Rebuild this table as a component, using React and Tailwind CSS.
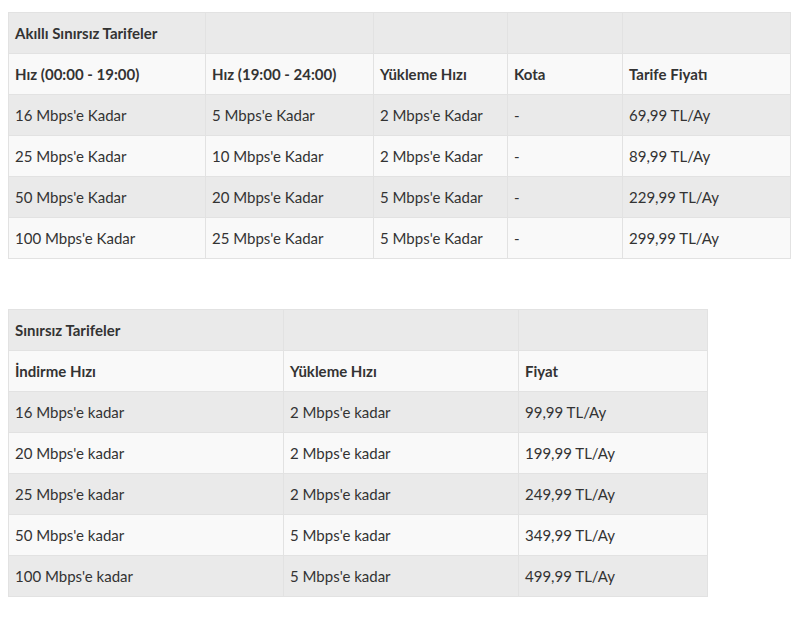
import React from 'react';

const smart = {
  title: 'Akıllı Sınırsız Tarifeler',
  cols: ['w-[197px]', 'w-[168px]', 'w-[134px]', 'w-[115px]', 'w-[168px]'],
  head: ['Hız (00:00 - 19:00)', 'Hız (19:00 - 24:00)', 'Yükleme Hızı', 'Kota', 'Tarife Fiyatı'],
  rows: [
    ["16 Mbps'e Kadar", "5 Mbps'e Kadar", "2 Mbps'e Kadar", '-', '69,99 TL/Ay'],
    ["25 Mbps'e Kadar", "10 Mbps'e Kadar", "2 Mbps'e Kadar", '-', '89,99 TL/Ay'],
    ["50 Mbps'e Kadar", "20 Mbps'e Kadar", "5 Mbps'e Kadar", '-', '229,99 TL/Ay'],
    ["100 Mbps'e Kadar", "25 Mbps'e Kadar", "5 Mbps'e Kadar", '-', '299,99 TL/Ay'],
  ],
};

const unlimited = {
  title: 'Sınırsız Tarifeler',
  cols: ['w-[275px]', 'w-[235px]', 'w-[189px]'],
  head: ['İndirme Hızı', 'Yükleme Hızı', 'Fiyat'],
  rows: [
    ["16 Mbps'e kadar", "2 Mbps'e kadar", '99,99 TL/Ay'],
    ["20 Mbps'e kadar", "2 Mbps'e kadar", '199,99 TL/Ay'],
    ["25 Mbps'e kadar", "2 Mbps'e kadar", '249,99 TL/Ay'],
    ["50 Mbps'e kadar", "5 Mbps'e kadar", '349,99 TL/Ay'],
    ["100 Mbps'e kadar", "5 Mbps'e kadar", '499,99 TL/Ay'],
  ],
};

const cell = 'h-[41px] border border-[#e2e2e2] px-[6px] align-middle text-left';

function PriceTable({ table, width }) {
  const n = table.cols.length;
  const stripe = (i) => (i % 2 === 0 ? 'bg-[#eaeaea]' : 'bg-[#f9f9f9]');

  return (
    <table className={`${width} table-fixed border-collapse text-[15px] text-[#333]`}>
      <colgroup>
        {table.cols.map((c, i) => (
          <col key={i} className={c} />
        ))}
      </colgroup>
      <tbody>
        <tr className={stripe(0)}>
          <td className={`${cell} font-bold`}>{table.title}</td>
          {Array.from({ length: n - 1 }).map((_, i) => (
            <td key={i} className={cell} />
          ))}
        </tr>
        <tr className={stripe(1)}>
          {table.head.map((h, i) => (
            <td key={i} className={`${cell} font-bold`}>{h}</td>
          ))}
        </tr>
        {table.rows.map((row, r) => (
          <tr key={r} className={stripe(r)}>
            {row.map((v, i) => (
              <td key={i} className={cell}>{v}</td>
            ))}
          </tr>
        ))}
      </tbody>
    </table>
  );
}

export default function App() {
  return (
    <div className="min-h-[619px] bg-white px-[8px] pt-[12px] font-['Lato',sans-serif]">
      <PriceTable table={smart} width="w-[782px]" />
      <div className="h-[50px]" />
      <PriceTable table={unlimited} width="w-[699px]" />
    </div>
  );
}
